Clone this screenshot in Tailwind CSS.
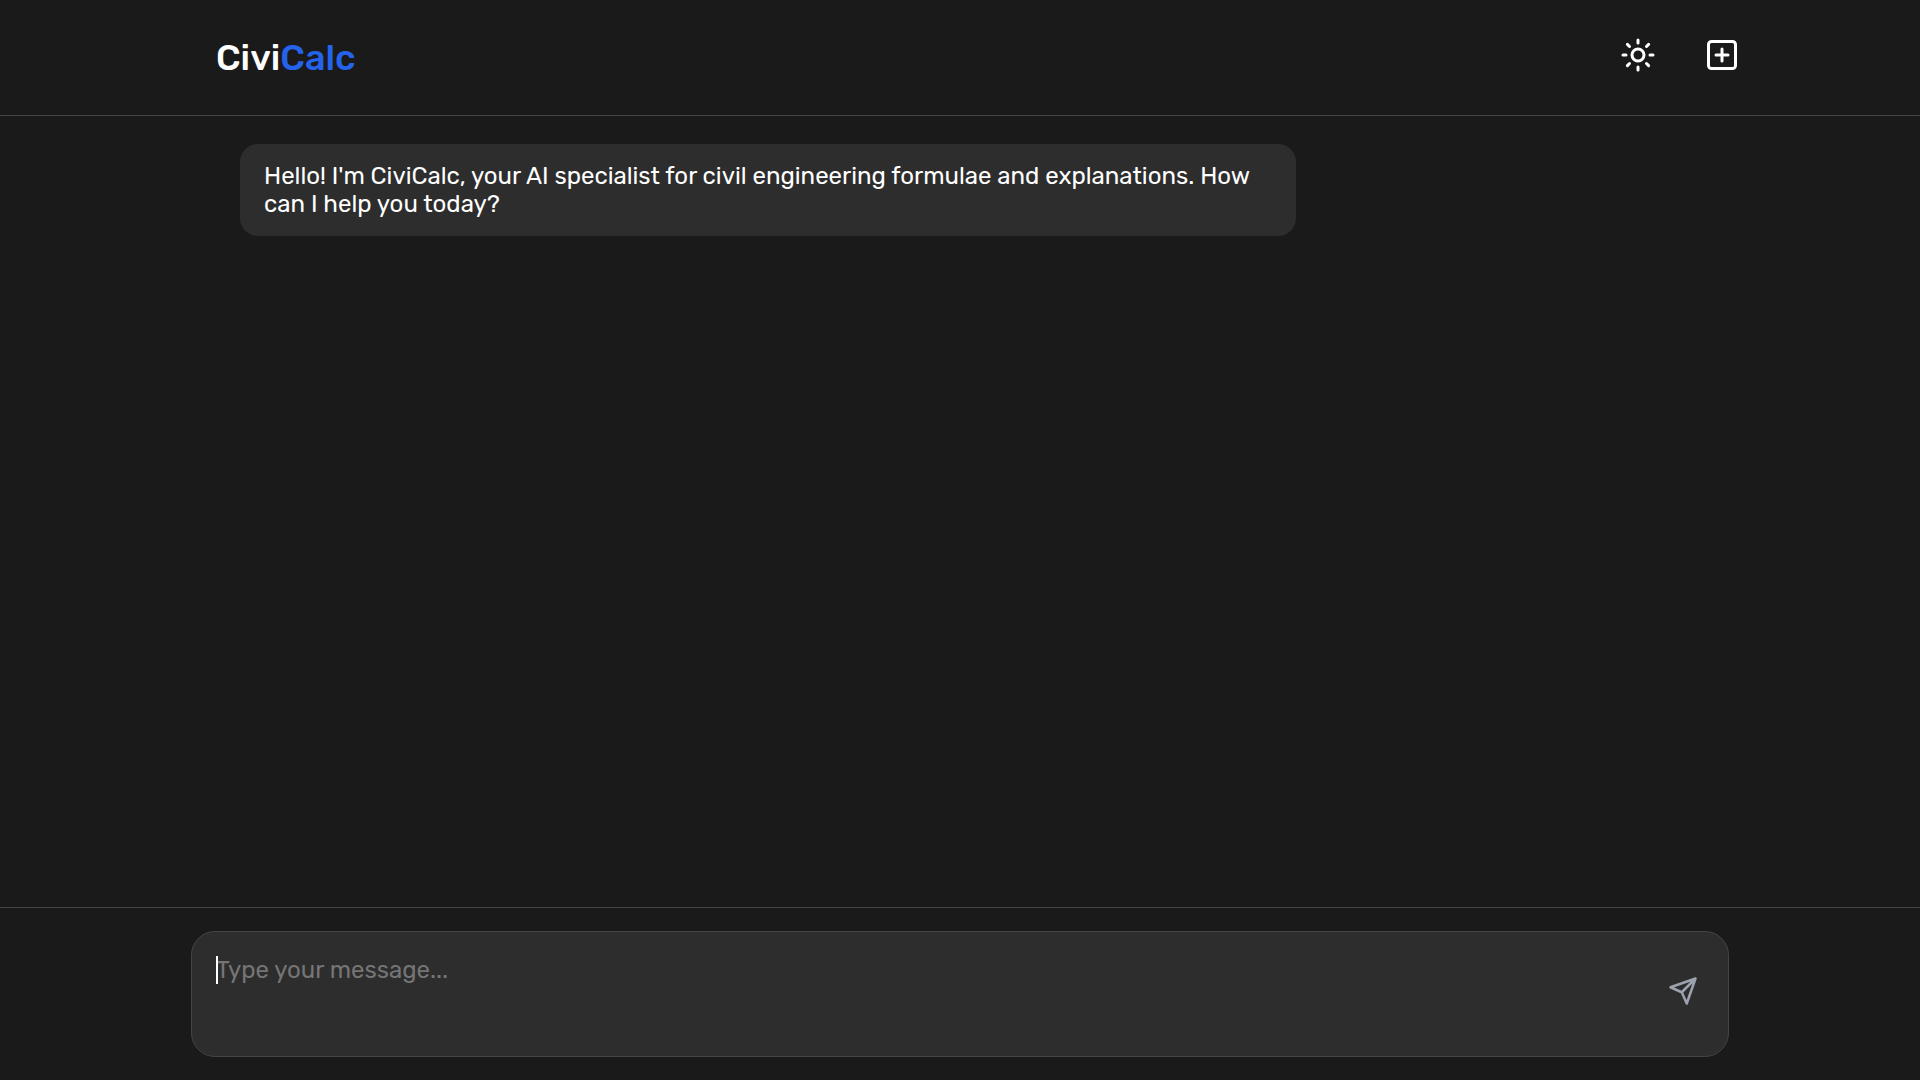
<!DOCTYPE html>
<html lang="en">
<head>
<meta charset="utf-8">
<title>CiviCalc</title>
<script src="https://cdn.jsdelivr.net/npm/@tailwindcss/browser@4"></script>
</head>
<body class="flex h-screen flex-col overflow-hidden bg-[#1a1a1a] font-[Rubik,Roboto,sans-serif] text-2xl/7 text-white">
  <header class="flex h-[116px] shrink-0 items-start justify-between border-b border-[#444] pl-[216px] pr-[180px]">
    <h1 class="mt-9 text-[36px]/[43px] font-medium">Civi<span class="text-[#2563eb]">Calc</span></h1>
    <div class="mt-[37px] flex gap-12">
      <button aria-label="Toggle theme">
        <svg class="size-9" viewBox="0 0 24 24" fill="none" stroke="currentColor" stroke-width="2" stroke-linecap="round" stroke-linejoin="round"><circle cx="12" cy="12" r="4"/><path d="M12 2v2M12 20v2M4.93 4.93l1.41 1.41M17.66 17.66l1.41 1.41M2 12h2M20 12h2M6.34 17.66l-1.41 1.41M19.07 4.93l-1.41 1.41"/></svg>
      </button>
      <button aria-label="New chat">
        <svg class="size-9" viewBox="0 0 24 24" fill="none" stroke="currentColor" stroke-width="2" stroke-linecap="round" stroke-linejoin="round"><rect x="3" y="3" width="18" height="18" rx="2"/><path d="M8 12h8M12 8v8"/></svg>
      </button>
    </div>
  </header>
  <main class="flex-1 pl-60 pt-7">
    <div class="h-[92px] w-[1056px] rounded-[18px] bg-[#2d2d2d] px-6 pt-[18px]">
      <p>Hello! I'm CiviCalc, your AI specialist for civil engineering formulae and explanations. How can I help you today?</p>
    </div>
  </main>
  <footer class="h-[173px] shrink-0 border-t border-[#444] px-[191px] pt-[23px]">
    <div class="flex h-[126px] items-start justify-between rounded-3xl border border-[#444] bg-[#2d2d2d] pl-6 pr-[30px]">
      <div class="mt-6 flex">
        <span class="z-10 h-7 w-0.5 bg-white"></span>
        <span class="-ml-0.5 text-[#757575]">Type your message...</span>
      </div>
      <button class="mt-11 text-[#9ca3af]" aria-label="Send">
        <svg class="size-[30px]" viewBox="0 0 24 24" fill="none" stroke="currentColor" stroke-width="2" stroke-linecap="round" stroke-linejoin="round"><path d="M22 2 11 13M22 2l-7 20-4-9-9-4z"/></svg>
      </button>
    </div>
  </footer>
</body>
</html>
